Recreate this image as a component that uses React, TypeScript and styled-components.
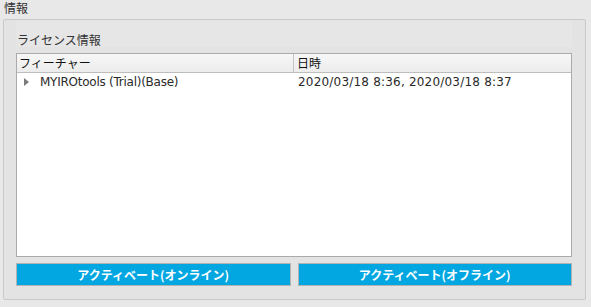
import React from "react";
import styled, { createGlobalStyle } from "styled-components";

const GlobalStyle = createGlobalStyle`
  html, body {
    margin: 0;
    padding: 0;
    background: #e8e8e8;
  }
  body {
    font-family: "DejaVu Sans", "Noto Sans CJK JP", sans-serif;
    font-size: 12px;
    color: #222;
  }
`;

const Page = styled.div`
  width: 591px;
  height: 307px;
  box-sizing: border-box;
  display: flex;
  flex-flow: column nowrap;
  padding: 0 5px 0 3px;
`;

const Title = styled.div`
  height: 19px;
  line-height: 16px;
  padding-left: 1px;
  font-family: "Noto Sans CJK JP", sans-serif;
  color: #333;
`;

const Group = styled.section`
  box-sizing: border-box;
  height: 281px;
  border: 1px solid #c9c9c9;
  border-radius: 2px;
  background: #e3e3e3;
  padding: 1px 13px 12px 12px;
  display: flex;
  flex-flow: column nowrap;
`;

const GroupLabel = styled.div`
  height: 26px;
  box-sizing: border-box;
  padding: 11px 0 0 1px;
  line-height: 16px;
  background: #e6e6e6;
  font-family: "Noto Sans CJK JP", sans-serif;
  color: #333;
  margin-bottom: 6px;
`;

const Table = styled.div`
  height: 204px;
  box-sizing: border-box;
  border: 1px solid #ababab;
  background: #fff;
  display: flex;
  flex-flow: column nowrap;
`;

const HeaderRow = styled.div`
  display: grid;
  grid-template-columns: 277px 1fr;
  height: 19px;
  box-sizing: border-box;
  border-bottom: 1px solid #bdbdbd;
  background: linear-gradient(to bottom, #f7f7f7 0%, #ececec 100%);
`;

const HeaderCell = styled.div<{ $first?: boolean }>`
  padding-left: ${p => (p.$first ? "2px" : "3px")};
  line-height: 18px;
  font-family: "Noto Sans CJK JP", sans-serif;
  color: #111;
  border-right: ${p => (p.$first ? "1px solid #c4c4c4" : "none")};
`;

const Row = styled.div`
  display: grid;
  grid-template-columns: 278px 1fr;
  height: 17px;
  align-items: center;
  color: #2a2a2a;
`;

const Cell = styled.div<{ $indent: number; $spacing: number }>`
  display: flex;
  align-items: center;
  padding-left: ${p => p.$indent}px;
  letter-spacing: ${p => p.$spacing}px;
  white-space: nowrap;
`;

const Toggle = styled.span`
  width: 0;
  height: 0;
  border-top: 4px solid transparent;
  border-bottom: 4px solid transparent;
  border-left: 5px solid #7a7a7a;
  margin-right: 11px;
`;

const Buttons = styled.div`
  display: grid;
  grid-template-columns: 1fr 1fr;
  gap: 7px;
  margin-top: 6px;
`;

const Button = styled.button`
  height: 23px;
  box-sizing: border-box;
  border: 1px solid #b3b3b3;
  border-radius: 0;
  background: #02a7e2;
  color: #fff;
  font-family: "Noto Sans CJK JP", sans-serif;
  font-size: 12px;
  font-weight: bold;
  padding: 0;
  line-height: 21px;
`;

const licenses = [
  { feature: "MYIROtools (Trial)(Base)", date: "2020/03/18 8:36, 2020/03/18 8:37" },
];

const App = () => (
  <>
    <GlobalStyle />
    <Page>
      <Title>情報</Title>
      <Group>
        <GroupLabel>ライセンス情報</GroupLabel>
        <Table>
          <HeaderRow>
            <HeaderCell $first>フィーチャー</HeaderCell>
            <HeaderCell>日時</HeaderCell>
          </HeaderRow>
          {licenses.map(l => (
            <Row key={l.feature}>
              <Cell $indent={7} $spacing={-0.25}>
                <Toggle />
                {l.feature}
              </Cell>
              <Cell $indent={3} $spacing={0.2}>
                {l.date}
              </Cell>
            </Row>
          ))}
        </Table>
        <Buttons>
          <Button>アクティベート(オンライン)</Button>
          <Button>アクティベート(オフライン)</Button>
        </Buttons>
      </Group>
    </Page>
  </>
);

export default App;
